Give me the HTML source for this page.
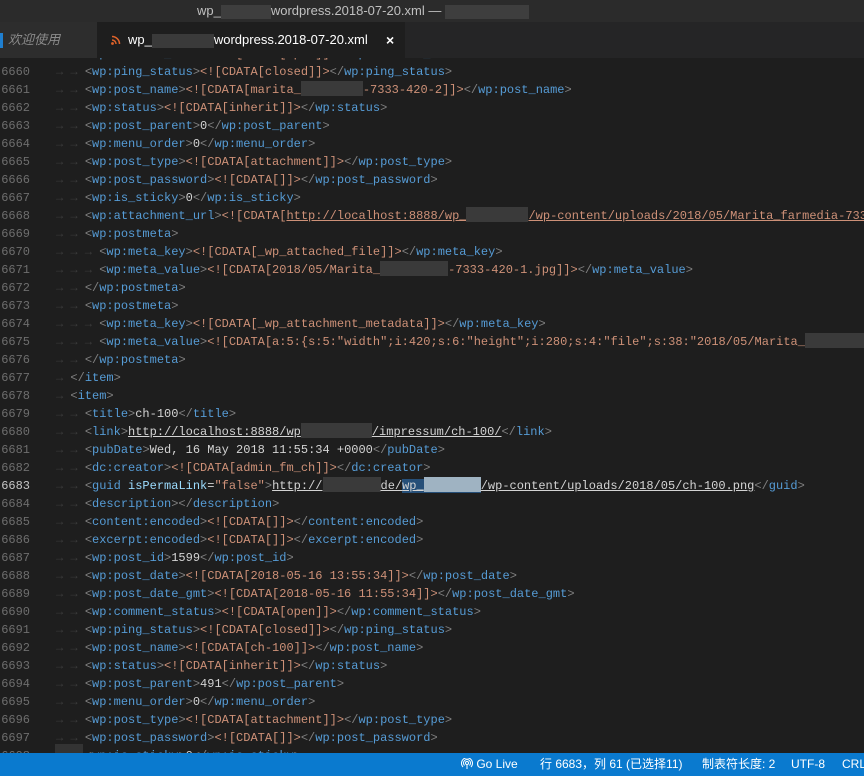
<!DOCTYPE html>
<html><head><meta charset="utf-8"><style>
html,body{margin:0;padding:0;width:864px;height:776px;overflow:hidden;background:#1e1e1e;font-family:"Liberation Sans","Noto Sans CJK SC",sans-serif;}
#title{position:absolute;left:0;top:0;width:864px;height:22px;background:#2b2b2b;color:#c0c0c0;font-size:13px;line-height:22px;}
#title .t{position:absolute;left:197px;top:0;white-space:pre}
.bl{display:inline-block;background:#3e3e3e;height:14px;vertical-align:middle}
#tabs{position:absolute;left:0;top:22px;width:864px;height:36px;background:#252526;}
#tab0{position:absolute;left:0;top:0;width:97px;height:36px;background:#2d2d2d;color:#8b8b8b;font-style:italic;font-size:13px;line-height:36px;}
#tab0 .bar{position:absolute;left:0;top:11px;width:3px;height:15px;background:#1f7fd0}
#tab1{position:absolute;left:97px;top:0;width:308px;height:36px;background:#1e1e1e;color:#fff;font-size:13px;line-height:36px;}
#ed{position:absolute;left:0;top:0;width:864px;height:776px;font-family:"Liberation Mono",monospace;font-size:12px;}
.ln{position:absolute;left:0;width:30px;text-align:right;color:#6e6e6e;height:18px;line-height:18px}
.cd{position:absolute;left:56px;white-space:pre;height:18px;line-height:18px;color:#d4d4d4}
.g{color:#808080}.b{color:#569cd6}.o{color:#ce9178}.a{color:#9cdcfe}.w{color:#d4d4d4}.u{text-decoration:underline}
.ar{color:#3d3d3d}
.x{display:inline-block;background:#3a3a3a;height:15px;vertical-align:-3px}
.sel{background:#264f78}
#status{position:absolute;left:0;top:753px;width:864px;height:23px;background:#0a7acf;color:#fff;font-size:12px;line-height:23px;}
#status span{position:absolute;top:0;white-space:nowrap}
</style></head><body>
<div id="ed">
<div class="ln" style="top:45px">6659</div><div class="cd" style="top:45px"><span class="ar">→ → </span><span class="g">&lt;</span><span class="b">wp:comment_status</span><span class="g">&gt;</span><span class="o">&lt;![CDATA[open]]&gt;</span><span class="g">&lt;/</span><span class="b">wp:comment_status</span><span class="g">&gt;</span></div>
<div class="ln" style="top:63px">6660</div><div class="cd" style="top:63px"><span class="ar">→ → </span><span class="g">&lt;</span><span class="b">wp:ping_status</span><span class="g">&gt;</span><span class="o">&lt;![CDATA[closed]]&gt;</span><span class="g">&lt;/</span><span class="b">wp:ping_status</span><span class="g">&gt;</span></div>
<div class="ln" style="top:81px">6661</div><div class="cd" style="top:81px"><span class="ar">→ → </span><span class="g">&lt;</span><span class="b">wp:post_name</span><span class="g">&gt;</span><span class="o">&lt;![CDATA[marita_<span class="x" style="width:62px"></span>-7333-420-2]]&gt;</span><span class="g">&lt;/</span><span class="b">wp:post_name</span><span class="g">&gt;</span></div>
<div class="ln" style="top:99px">6662</div><div class="cd" style="top:99px"><span class="ar">→ → </span><span class="g">&lt;</span><span class="b">wp:status</span><span class="g">&gt;</span><span class="o">&lt;![CDATA[inherit]]&gt;</span><span class="g">&lt;/</span><span class="b">wp:status</span><span class="g">&gt;</span></div>
<div class="ln" style="top:117px">6663</div><div class="cd" style="top:117px"><span class="ar">→ → </span><span class="g">&lt;</span><span class="b">wp:post_parent</span><span class="g">&gt;</span>0<span class="g">&lt;/</span><span class="b">wp:post_parent</span><span class="g">&gt;</span></div>
<div class="ln" style="top:135px">6664</div><div class="cd" style="top:135px"><span class="ar">→ → </span><span class="g">&lt;</span><span class="b">wp:menu_order</span><span class="g">&gt;</span>0<span class="g">&lt;/</span><span class="b">wp:menu_order</span><span class="g">&gt;</span></div>
<div class="ln" style="top:153px">6665</div><div class="cd" style="top:153px"><span class="ar">→ → </span><span class="g">&lt;</span><span class="b">wp:post_type</span><span class="g">&gt;</span><span class="o">&lt;![CDATA[attachment]]&gt;</span><span class="g">&lt;/</span><span class="b">wp:post_type</span><span class="g">&gt;</span></div>
<div class="ln" style="top:171px">6666</div><div class="cd" style="top:171px"><span class="ar">→ → </span><span class="g">&lt;</span><span class="b">wp:post_password</span><span class="g">&gt;</span><span class="o">&lt;![CDATA[]]&gt;</span><span class="g">&lt;/</span><span class="b">wp:post_password</span><span class="g">&gt;</span></div>
<div class="ln" style="top:189px">6667</div><div class="cd" style="top:189px"><span class="ar">→ → </span><span class="g">&lt;</span><span class="b">wp:is_sticky</span><span class="g">&gt;</span>0<span class="g">&lt;/</span><span class="b">wp:is_sticky</span><span class="g">&gt;</span></div>
<div class="ln" style="top:207px">6668</div><div class="cd" style="top:207px"><span class="ar">→ → </span><span class="g">&lt;</span><span class="b">wp:attachment_url</span><span class="g">&gt;</span><span class="o">&lt;![CDATA[<span class="u">http://localhost:8888/wp_<span class="x" style="width:62px"></span>/wp-content/uploads/2018/05/Marita_farmedia-7333</span></span></div>
<div class="ln" style="top:225px">6669</div><div class="cd" style="top:225px"><span class="ar">→ → </span><span class="g">&lt;</span><span class="b">wp:postmeta</span><span class="g">&gt;</span></div>
<div class="ln" style="top:243px">6670</div><div class="cd" style="top:243px"><span class="ar">→ → → </span><span class="g">&lt;</span><span class="b">wp:meta_key</span><span class="g">&gt;</span><span class="o">&lt;![CDATA[_wp_attached_file]]&gt;</span><span class="g">&lt;/</span><span class="b">wp:meta_key</span><span class="g">&gt;</span></div>
<div class="ln" style="top:261px">6671</div><div class="cd" style="top:261px"><span class="ar">→ → → </span><span class="g">&lt;</span><span class="b">wp:meta_value</span><span class="g">&gt;</span><span class="o">&lt;![CDATA[2018/05/Marita_<span class="x" style="width:68px"></span>-7333-420-1.jpg]]&gt;</span><span class="g">&lt;/</span><span class="b">wp:meta_value</span><span class="g">&gt;</span></div>
<div class="ln" style="top:279px">6672</div><div class="cd" style="top:279px"><span class="ar">→ → </span><span class="g">&lt;/</span><span class="b">wp:postmeta</span><span class="g">&gt;</span></div>
<div class="ln" style="top:297px">6673</div><div class="cd" style="top:297px"><span class="ar">→ → </span><span class="g">&lt;</span><span class="b">wp:postmeta</span><span class="g">&gt;</span></div>
<div class="ln" style="top:315px">6674</div><div class="cd" style="top:315px"><span class="ar">→ → → </span><span class="g">&lt;</span><span class="b">wp:meta_key</span><span class="g">&gt;</span><span class="o">&lt;![CDATA[_wp_attachment_metadata]]&gt;</span><span class="g">&lt;/</span><span class="b">wp:meta_key</span><span class="g">&gt;</span></div>
<div class="ln" style="top:333px">6675</div><div class="cd" style="top:333px"><span class="ar">→ → → </span><span class="g">&lt;</span><span class="b">wp:meta_value</span><span class="g">&gt;</span><span class="o">&lt;![CDATA[a:5:{s:5:"width";i:420;s:6:"height";i:280;s:4:"file";s:38:"2018/05/Marita_<span class="x" style="width:60px"></span></span></div>
<div class="ln" style="top:351px">6676</div><div class="cd" style="top:351px"><span class="ar">→ → </span><span class="g">&lt;/</span><span class="b">wp:postmeta</span><span class="g">&gt;</span></div>
<div class="ln" style="top:369px">6677</div><div class="cd" style="top:369px"><span class="ar">→ </span><span class="g">&lt;/</span><span class="b">item</span><span class="g">&gt;</span></div>
<div class="ln" style="top:387px">6678</div><div class="cd" style="top:387px"><span class="ar">→ </span><span class="g">&lt;</span><span class="b">item</span><span class="g">&gt;</span></div>
<div class="ln" style="top:405px">6679</div><div class="cd" style="top:405px"><span class="ar">→ → </span><span class="g">&lt;</span><span class="b">title</span><span class="g">&gt;</span>ch-100<span class="g">&lt;/</span><span class="b">title</span><span class="g">&gt;</span></div>
<div class="ln" style="top:423px">6680</div><div class="cd" style="top:423px"><span class="ar">→ → </span><span class="g">&lt;</span><span class="b">link</span><span class="g">&gt;</span><span class="u">http://localhost:8888/wp<span class="x" style="width:71px"></span>/impressum/ch-100/</span><span class="g">&lt;/</span><span class="b">link</span><span class="g">&gt;</span></div>
<div class="ln" style="top:441px">6681</div><div class="cd" style="top:441px"><span class="ar">→ → </span><span class="g">&lt;</span><span class="b">pubDate</span><span class="g">&gt;</span>Wed, 16 May 2018 11:55:34 +0000<span class="g">&lt;/</span><span class="b">pubDate</span><span class="g">&gt;</span></div>
<div class="ln" style="top:459px">6682</div><div class="cd" style="top:459px"><span class="ar">→ → </span><span class="g">&lt;</span><span class="b">dc:creator</span><span class="g">&gt;</span><span class="o">&lt;![CDATA[admin_fm_ch]]&gt;</span><span class="g">&lt;/</span><span class="b">dc:creator</span><span class="g">&gt;</span></div>
<div class="ln" style="top:477px;color:#c6c6c6">6683</div><div class="cd" style="top:477px"><span class="ar">→ → </span><span class="g">&lt;</span><span class="b">guid</span> <span class="a">isPermaLink</span>=<span class="o">"false"</span><span class="g">&gt;</span><span class="u">http://<span class="x" style="width:58px"></span>de/<span class="sel">wp_<span class="x" style="width:57px;background:#9fb3c2"></span></span>/wp-content/uploads/2018/05/ch-100.png</span><span class="g">&lt;/</span><span class="b">guid</span><span class="g">&gt;</span></div>
<div class="ln" style="top:495px">6684</div><div class="cd" style="top:495px"><span class="ar">→ → </span><span class="g">&lt;</span><span class="b">description</span><span class="g">&gt;&lt;/</span><span class="b">description</span><span class="g">&gt;</span></div>
<div class="ln" style="top:513px">6685</div><div class="cd" style="top:513px"><span class="ar">→ → </span><span class="g">&lt;</span><span class="b">content:encoded</span><span class="g">&gt;</span><span class="o">&lt;![CDATA[]]&gt;</span><span class="g">&lt;/</span><span class="b">content:encoded</span><span class="g">&gt;</span></div>
<div class="ln" style="top:531px">6686</div><div class="cd" style="top:531px"><span class="ar">→ → </span><span class="g">&lt;</span><span class="b">excerpt:encoded</span><span class="g">&gt;</span><span class="o">&lt;![CDATA[]]&gt;</span><span class="g">&lt;/</span><span class="b">excerpt:encoded</span><span class="g">&gt;</span></div>
<div class="ln" style="top:549px">6687</div><div class="cd" style="top:549px"><span class="ar">→ → </span><span class="g">&lt;</span><span class="b">wp:post_id</span><span class="g">&gt;</span>1599<span class="g">&lt;/</span><span class="b">wp:post_id</span><span class="g">&gt;</span></div>
<div class="ln" style="top:567px">6688</div><div class="cd" style="top:567px"><span class="ar">→ → </span><span class="g">&lt;</span><span class="b">wp:post_date</span><span class="g">&gt;</span><span class="o">&lt;![CDATA[2018-05-16 13:55:34]]&gt;</span><span class="g">&lt;/</span><span class="b">wp:post_date</span><span class="g">&gt;</span></div>
<div class="ln" style="top:585px">6689</div><div class="cd" style="top:585px"><span class="ar">→ → </span><span class="g">&lt;</span><span class="b">wp:post_date_gmt</span><span class="g">&gt;</span><span class="o">&lt;![CDATA[2018-05-16 11:55:34]]&gt;</span><span class="g">&lt;/</span><span class="b">wp:post_date_gmt</span><span class="g">&gt;</span></div>
<div class="ln" style="top:603px">6690</div><div class="cd" style="top:603px"><span class="ar">→ → </span><span class="g">&lt;</span><span class="b">wp:comment_status</span><span class="g">&gt;</span><span class="o">&lt;![CDATA[open]]&gt;</span><span class="g">&lt;/</span><span class="b">wp:comment_status</span><span class="g">&gt;</span></div>
<div class="ln" style="top:621px">6691</div><div class="cd" style="top:621px"><span class="ar">→ → </span><span class="g">&lt;</span><span class="b">wp:ping_status</span><span class="g">&gt;</span><span class="o">&lt;![CDATA[closed]]&gt;</span><span class="g">&lt;/</span><span class="b">wp:ping_status</span><span class="g">&gt;</span></div>
<div class="ln" style="top:639px">6692</div><div class="cd" style="top:639px"><span class="ar">→ → </span><span class="g">&lt;</span><span class="b">wp:post_name</span><span class="g">&gt;</span><span class="o">&lt;![CDATA[ch-100]]&gt;</span><span class="g">&lt;/</span><span class="b">wp:post_name</span><span class="g">&gt;</span></div>
<div class="ln" style="top:657px">6693</div><div class="cd" style="top:657px"><span class="ar">→ → </span><span class="g">&lt;</span><span class="b">wp:status</span><span class="g">&gt;</span><span class="o">&lt;![CDATA[inherit]]&gt;</span><span class="g">&lt;/</span><span class="b">wp:status</span><span class="g">&gt;</span></div>
<div class="ln" style="top:675px">6694</div><div class="cd" style="top:675px"><span class="ar">→ → </span><span class="g">&lt;</span><span class="b">wp:post_parent</span><span class="g">&gt;</span>491<span class="g">&lt;/</span><span class="b">wp:post_parent</span><span class="g">&gt;</span></div>
<div class="ln" style="top:693px">6695</div><div class="cd" style="top:693px"><span class="ar">→ → </span><span class="g">&lt;</span><span class="b">wp:menu_order</span><span class="g">&gt;</span>0<span class="g">&lt;/</span><span class="b">wp:menu_order</span><span class="g">&gt;</span></div>
<div class="ln" style="top:711px">6696</div><div class="cd" style="top:711px"><span class="ar">→ → </span><span class="g">&lt;</span><span class="b">wp:post_type</span><span class="g">&gt;</span><span class="o">&lt;![CDATA[attachment]]&gt;</span><span class="g">&lt;/</span><span class="b">wp:post_type</span><span class="g">&gt;</span></div>
<div class="ln" style="top:729px">6697</div><div class="cd" style="top:729px"><span class="ar">→ → </span><span class="g">&lt;</span><span class="b">wp:post_password</span><span class="g">&gt;</span><span class="o">&lt;![CDATA[]]&gt;</span><span class="g">&lt;/</span><span class="b">wp:post_password</span><span class="g">&gt;</span></div>
<div class="ln" style="top:747px">6698</div><div class="cd" style="top:747px"><span class="ar">→ → </span><span class="g">&lt;</span><span class="b">wp:is_sticky</span><span class="g">&gt;</span>0<span class="g">&lt;/</span><span class="b">wp:is_sticky</span><span class="g">&gt;</span></div>
<div style="position:absolute;left:55px;top:744px;width:28px;height:10px;background:#333"></div>
</div>
<div id="title"><span class="t">wp_<span class="bl" style="width:50px"></span>wordpress.2018-07-20.xml — <span class="bl" style="width:84px"></span></span></div>
<div id="tabs">
<div id="tab0"><div class="bar"></div><span style="position:absolute;left:8px">欢迎使用</span></div>
<div id="tab1">
<svg style="position:absolute;left:14px;top:13px" width="10" height="10" viewBox="0 0 10 10"><circle cx="1.5" cy="8.5" r="1.4" fill="#e0632a"/><path d="M1 5a4 4 0 0 1 4 4" stroke="#e0632a" stroke-width="1.5" fill="none"/><path d="M1 1.5a7.5 7.5 0 0 1 7.5 7.5" stroke="#e0632a" stroke-width="1.5" fill="none"/></svg>
<span style="position:absolute;left:31px">wp_<span class="bl" style="width:62px;background:#3a3a3a"></span>wordpress.2018-07-20.xml</span>
<span style="position:absolute;left:289px;font-size:14px;font-weight:bold">×</span>
</div>
</div>
<div id="status">
<span style="left:461px"><svg width="12" height="12" viewBox="0 0 12 12" style="vertical-align:-2px"><circle cx="6" cy="5" r="1.5" fill="none" stroke="#fff"/><path d="M3.5 7.5a3.5 3.5 0 1 1 5 0M2 9a5.5 5.5 0 1 1 8 0M6 6.5V11" stroke="#fff" fill="none"/></svg> Go Live</span>
<span style="left:540px">行 6683，列 61 (已选择11)</span>
<span style="left:702px">制表符长度: 2</span>
<span style="left:791px">UTF-8</span>
<span style="left:842px">CRLF</span>
</div>
</body></html>
